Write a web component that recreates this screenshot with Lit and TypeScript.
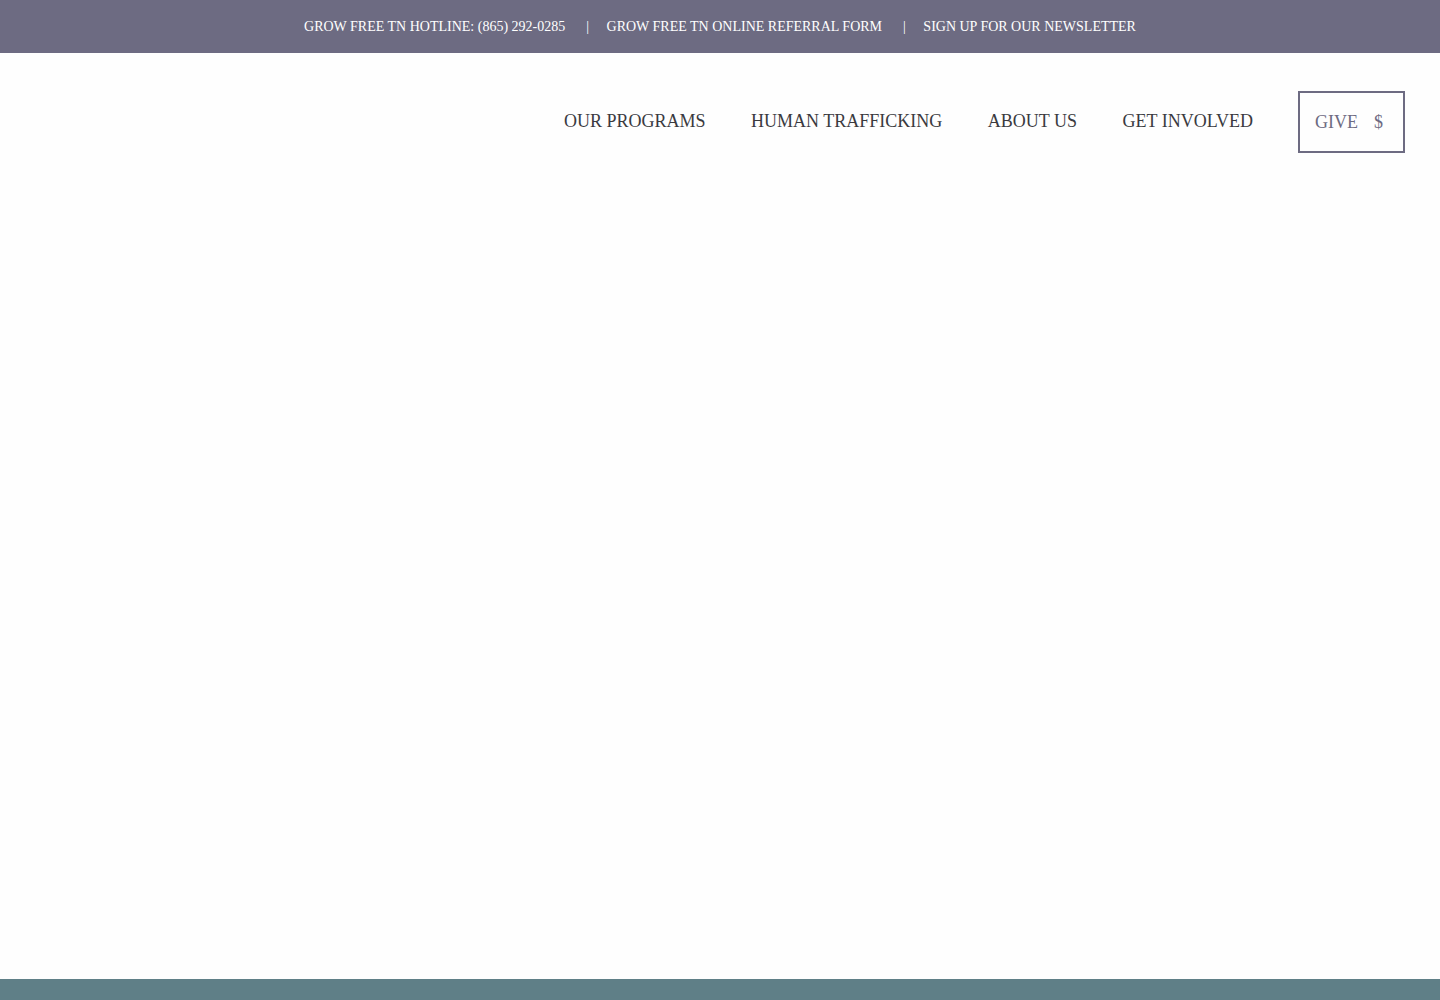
import { LitElement, html, css } from "lit";
import { customElement } from "lit/decorators.js";

const topLinks = [
  "GROW FREE TN HOTLINE: (865) 292-0285",
  "GROW FREE TN ONLINE REFERRAL FORM",
  "SIGN UP FOR OUR NEWSLETTER",
];

const navLinks = ["OUR PROGRAMS", "HUMAN TRAFFICKING", "ABOUT US", "GET INVOLVED"];

@customElement("app-root")
export class AppRoot extends LitElement {
  static styles = css`
    :host {
      display: flex;
      flex-direction: column;
      min-height: 100vh;
      background: #fefefe;
      font-family: "Liberation Serif", serif;
    }
    a {
      color: inherit;
      text-decoration: none;
    }
    .top-bar {
      display: flex;
      justify-content: center;
      padding: 19px 16px 18px;
      background: #6d6b82;
      color: #ffffff;
      font-size: 14px;
      line-height: 16px;
    }
    .top-link + .top-link::before {
      content: "| ";
      margin: 0 14px 0 21px;
      white-space: pre;
    }
    .site-header {
      display: flex;
      justify-content: flex-end;
      align-items: center;
      padding: 38px 35px;
    }
    .main-nav {
      margin-right: 45px;
      padding-bottom: 2px;
      color: #3a3a3f;
      font-size: 18px;
      line-height: 24px;
    }
    .nav-link + .nav-link {
      margin-left: 41px;
    }
    .give {
      display: flex;
      gap: 16px;
      padding: 17px 20px 17px 15px;
      border: 2px solid #6d6b82;
      color: #6d6b82;
      font-size: 18px;
      line-height: 24px;
    }
    .hero {
      flex: 1;
    }
    .band {
      height: 21px;
      background: #5f7f87;
    }
  `;

  render() {
    return html`
      <nav class="top-bar" aria-label="Quick links">
        ${topLinks.map((label) => html`<a class="top-link" href="#">${label}</a>`)}
      </nav>
      <header class="site-header">
        <nav class="main-nav" aria-label="Main">
          ${navLinks.map((label) => html`<a class="nav-link" href="#">${label}</a> `)}
        </nav>
        <a class="give" href="#"><span>GIVE</span><span>$</span></a>
      </header>
      <main class="hero"></main>
      <div class="band"></div>
    `;
  }
}
